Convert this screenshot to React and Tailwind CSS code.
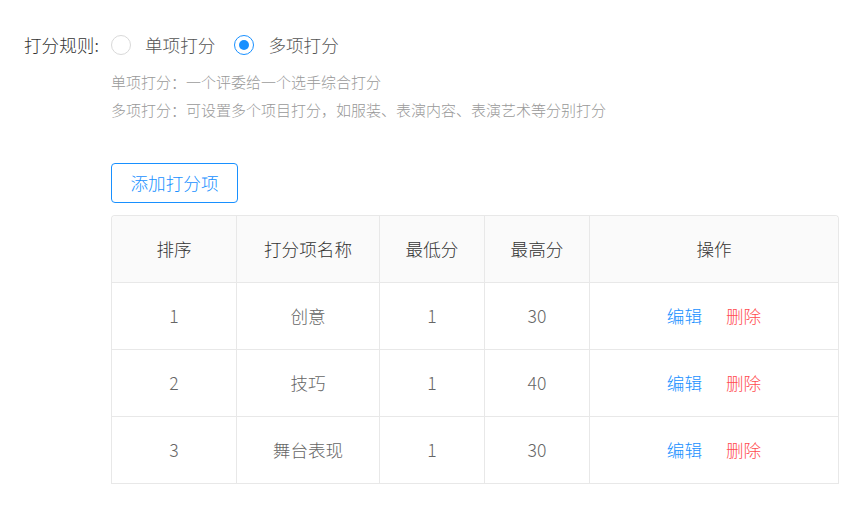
import React from "react";

const rows = [
  { no: 1, name: "创意", min: 1, max: 30 },
  { no: 2, name: "技巧", min: 1, max: 40 },
  { no: 3, name: "舞台表现", min: 1, max: 30 },
];

const font = { fontFamily: '"Noto Sans CJK SC", "Noto Sans", sans-serif' };

function Radio({ checked, label }) {
  return (
    <label className="flex items-center cursor-pointer">
      <span
        className={
          checked
            ? "w-[20px] h-[20px] rounded-full border border-[#1890ff] flex items-center justify-center"
            : "w-[20px] h-[20px] rounded-full border border-[#d9d9d9]"
        }
      >
        {checked && <span className="w-[10px] h-[10px] rounded-full bg-[#1890ff]" />}
      </span>
      <span className="ml-[14px] text-[17.6px] text-[#555]">{label}</span>
    </label>
  );
}

export default function App() {
  return (
    <div className="w-[855px] h-[510px] bg-white pt-[33px] font-light" style={font}>
      {/* rule selector */}
      <div className="flex items-center h-[24px] pl-[24px]">
        <span className="w-[87px] text-[17.6px] text-[#333]">打分规则:</span>
        <div className="flex items-center gap-[19px]">
          <Radio label="单项打分" />
          <Radio checked label="多项打分" />
        </div>
      </div>

      <div className="pl-[111px]">
        <div className="mt-[11px] text-[15px] leading-[28px] text-[#999]">
          <p>单项打分：一个评委给一个选手综合打分</p>
          <p>多项打分：可设置多个项目打分，如服装、表演内容、表演艺术等分别打分</p>
        </div>

        <button className="mt-[39px] h-[40px] w-[127px] rounded border border-[#1890ff] text-[17.6px] text-[#1890ff] bg-white">
          添加打分项
        </button>

        {/* table */}
        <div className="mt-[12px] w-[728px] border-l border-r border-t border-[#e8e8e8] rounded-t text-[17.6px]">
          <div className="grid grid-cols-[125px_143px_105px_105px_1fr] h-[67px] bg-[#fafafa] border-b border-[#e8e8e8] text-[#333] rounded-t">
            {["排序", "打分项名称", "最低分", "最高分", "操作"].map((h, i) => (
              <div
                key={h}
                className={
                  i < 4
                    ? "flex items-center justify-center border-r border-[#e8e8e8]"
                    : "flex items-center justify-center"
                }
              >
                {h}
              </div>
            ))}
          </div>
          {rows.map((r) => (
            <div
              key={r.no}
              className="grid grid-cols-[125px_143px_105px_105px_1fr] h-[67px] border-b border-[#e8e8e8] text-[#666]"
            >
              <div className="flex items-center justify-center border-r border-[#e8e8e8]">{r.no}</div>
              <div className="flex items-center justify-center border-r border-[#e8e8e8]">{r.name}</div>
              <div className="flex items-center justify-center border-r border-[#e8e8e8]">{r.min}</div>
              <div className="flex items-center justify-center border-r border-[#e8e8e8]">{r.max}</div>
              <div className="flex items-center justify-center gap-[24px]">
                <button className="text-[#1890ff]">编辑</button>
                <button className="text-[#ff4d4f]">删除</button>
              </div>
            </div>
          ))}
        </div>
      </div>
    </div>
  );
}
